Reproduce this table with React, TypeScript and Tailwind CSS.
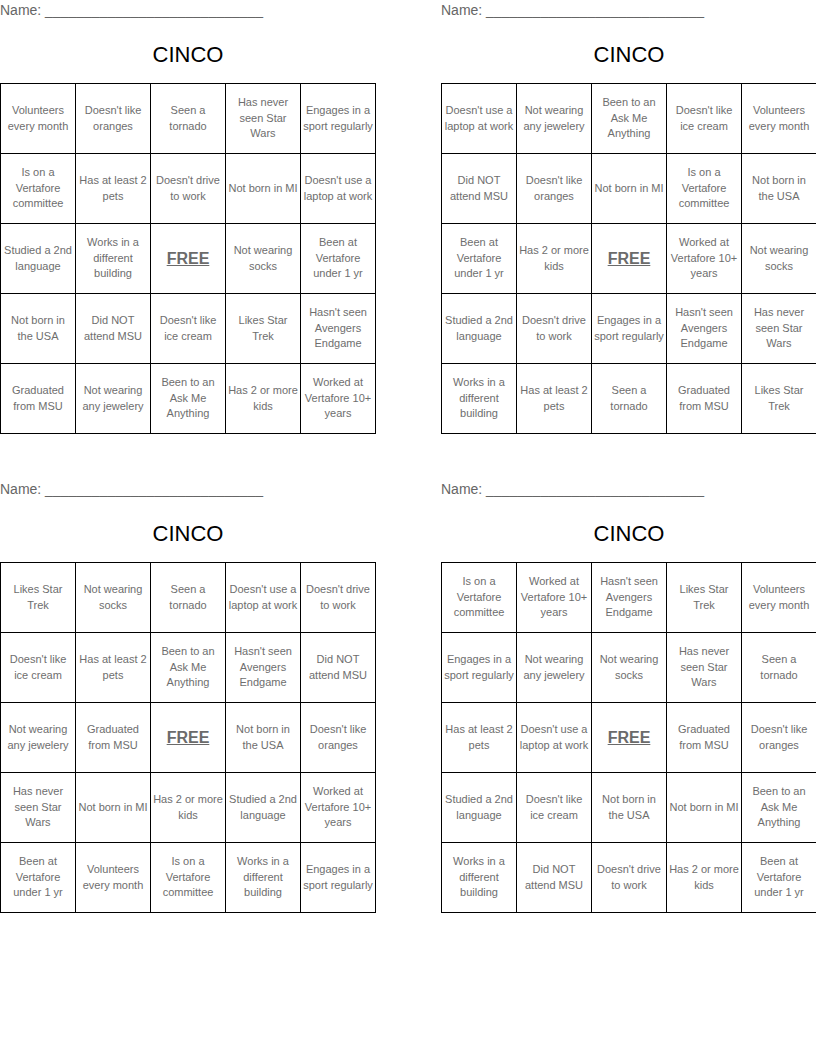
import React from "react";

const cards: string[][] = [
  [
    "Volunteers every month", "Doesn't like oranges", "Seen a tornado", "Has never seen Star Wars", "Engages in a sport regularly",
    "Is on a Vertafore committee", "Has at least 2 pets", "Doesn't drive to work", "Not born in MI", "Doesn't use a laptop at work",
    "Studied a 2nd language", "Works in a different building", "FREE", "Not wearing socks", "Been at Vertafore under 1 yr",
    "Not born in the USA", "Did NOT attend MSU", "Doesn't like ice cream", "Likes Star Trek", "Hasn't seen Avengers Endgame",
    "Graduated from MSU", "Not wearing any jewelery", "Been to an Ask Me Anything", "Has 2 or more kids", "Worked at Vertafore 10+ years",
  ],
  [
    "Doesn't use a laptop at work", "Not wearing any jewelery", "Been to an Ask Me Anything", "Doesn't like ice cream", "Volunteers every month",
    "Did NOT attend MSU", "Doesn't like oranges", "Not born in MI", "Is on a Vertafore committee", "Not born in the USA",
    "Been at Vertafore under 1 yr", "Has 2 or more kids", "FREE", "Worked at Vertafore 10+ years", "Not wearing socks",
    "Studied a 2nd language", "Doesn't drive to work", "Engages in a sport regularly", "Hasn't seen Avengers Endgame", "Has never seen Star Wars",
    "Works in a different building", "Has at least 2 pets", "Seen a tornado", "Graduated from MSU", "Likes Star Trek",
  ],
  [
    "Likes Star Trek", "Not wearing socks", "Seen a tornado", "Doesn't use a laptop at work", "Doesn't drive to work",
    "Doesn't like ice cream", "Has at least 2 pets", "Been to an Ask Me Anything", "Hasn't seen Avengers Endgame", "Did NOT attend MSU",
    "Not wearing any jewelery", "Graduated from MSU", "FREE", "Not born in the USA", "Doesn't like oranges",
    "Has never seen Star Wars", "Not born in MI", "Has 2 or more kids", "Studied a 2nd language", "Worked at Vertafore 10+ years",
    "Been at Vertafore under 1 yr", "Volunteers every month", "Is on a Vertafore committee", "Works in a different building", "Engages in a sport regularly",
  ],
  [
    "Is on a Vertafore committee", "Worked at Vertafore 10+ years", "Hasn't seen Avengers Endgame", "Likes Star Trek", "Volunteers every month",
    "Engages in a sport regularly", "Not wearing any jewelery", "Not wearing socks", "Has never seen Star Wars", "Seen a tornado",
    "Has at least 2 pets", "Doesn't use a laptop at work", "FREE", "Graduated from MSU", "Doesn't like oranges",
    "Studied a 2nd language", "Doesn't like ice cream", "Not born in the USA", "Not born in MI", "Been to an Ask Me Anything",
    "Works in a different building", "Did NOT attend MSU", "Doesn't drive to work", "Has 2 or more kids", "Been at Vertafore under 1 yr",
  ],
];

function Card({ items }: { items: string[] }) {
  return (
    <div className="flex w-[376px] shrink-0 flex-col">
      <div className="h-[20px] text-[14px] leading-[20px] text-[#666666] whitespace-nowrap">
        Name: ____________________________
      </div>
      <div className="mt-[22px] h-[26px] text-center text-[22px] leading-[26px] text-black">CINCO</div>
      <div className="mt-[15px] grid w-[376px] grid-cols-5 border-l border-t border-black">
        {items.map((t, i) => (
          <div
            key={i}
            className="flex h-[70px] w-[75px] items-center justify-center border-b border-r border-black text-center"
          >
            {t === "FREE" ? (
              <span className="text-[16px] font-bold leading-[20px] text-[#6b6b6b] underline">FREE</span>
            ) : (
              <span className="block w-[71px] text-[11px] leading-[15.5px] text-[#6e6e6e]">{t}</span>
            )}
          </div>
        ))}
      </div>
    </div>
  );
}

export default function App() {
  return (
    <div
      className="flex h-[1056px] w-[816px] flex-col gap-[45px] overflow-hidden bg-white"
      style={{ fontFamily: '"Liberation Sans", Arial, sans-serif' }}
    >
      <div className="flex gap-[65px]">
        <Card items={cards[0]} />
        <Card items={cards[1]} />
      </div>
      <div className="flex gap-[65px]">
        <Card items={cards[2]} />
        <Card items={cards[3]} />
      </div>
    </div>
  );
}
